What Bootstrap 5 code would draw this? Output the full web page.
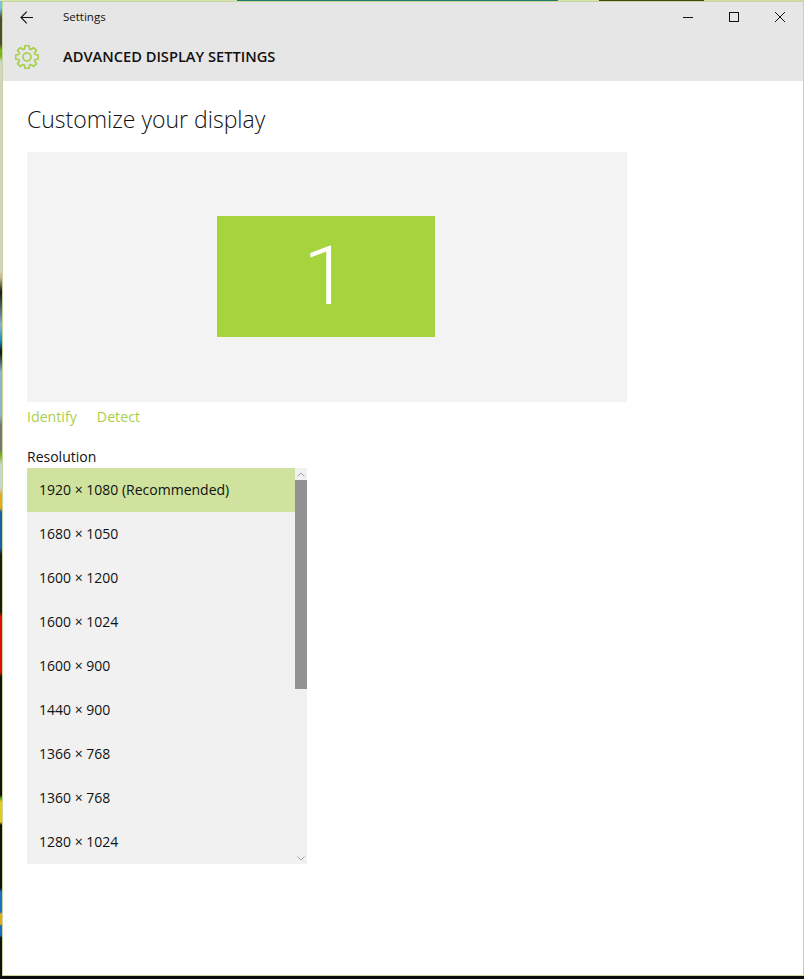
<!DOCTYPE html>
<html lang="en">
<head>
  <meta charset="UTF-8" />
  <meta name="viewport" content="width=device-width, initial-scale=1.0"/>
  <title>Settings</title>
  <link href="https://cdn.jsdelivr.net/npm/bootstrap@5.3.3/dist/css/bootstrap.min.css" rel="stylesheet"/>
  <style>
    html, body { height: 100%; }

    body {
      font-family: "Open Sans", "Liberation Sans", sans-serif;
      color: #111;
      padding: 2px 1px 4px 3px;
      background-color: #0b0b0b;
      background-image:
        linear-gradient(to right, #d4e3b0 0, #d4e3b0 237px, #1f7a6c 237px, #1f7a6c 558px, #d4e3b0 558px, #d4e3b0 599px, #3f4a14 599px, #3f4a14 704px, #cfdcaa 704px),
        linear-gradient(to bottom, #7cc4d8 0, #7cc4d8 8px, #4a4a38 18px, #4a4a38 44px, #7cb518 50px, #7cb518 56px, #cfd4c8 62px, #cfd4c8 270px, #c9b48c 278px, #1a1a1a 292px, #8fb4c4 325px, #1c8fc8 340px, #111 352px, #8fb4c4 372px, #8fb4c4 415px, #777 425px, #777 450px, #7cb518 455px, #c9d4d8 465px, #c9d4d8 488px, #e8a81c 495px, #e8a81c 508px, #1b5fa8 512px, #1b5fa8 548px, #1a1a10 555px, #1a1a10 612px, #e01010 617px, #e01010 672px, #111 677px, #111 795px, #4a9a30 798px, #e8c81c 802px, #e8c81c 822px, #111 825px, #111 888px, #1b6fc8 892px, #1b6fc8 912px, #e8a81c 914px, #e8a81c 924px, #1b6fc8 926px, #1b6fc8 935px, #111 938px, #111 975px);
      background-size: 100% 1px, 3px 100%;
      background-repeat: no-repeat;
    }

    .win-frame {
      height: 100%;
      background: #fff;
      box-shadow: 0 0 0 1px #c6d69c;
      overflow: hidden;
    }

    .win-head { background: #e6e6e6; height: 79px; }
    .title-row { height: 30px; }
    .back-btn { width: 48px; padding-left: 17px; }
    .win-label { font-size: 11.5px; margin-left: 12px; }
    .win-btn { width: 46px; height: 30px; }
    .page-row { height: 49px; padding-top: 1px; }
    .gear-wrap { width: 60px; padding-left: 12px; }
    .page-name { font-size: 14.65px; font-weight: 600; }

    .win-body { padding: 0 24px; }
    .page-title { font-size: 23px; font-weight: 300; line-height: 32px; margin: 22px 0 17px; }

    .display-box { width: 600px; height: 250px; padding: 0 2px 2px 0; background: #f3f3f3; }
    .display-tile {
      width: 218px;
      height: 121px;
      background: #a6d43d;
      color: #fff;
      font-family: Roboto, sans-serif;
      font-weight: 300;
      font-size: 82px;
      line-height: 1;
    }

    .link-row { font-size: 14.2px; height: 30px; gap: 20px; }
    .link-row a { color: #a8cf4c; text-decoration: none; }

    .res-label { font-size: 14px; line-height: 20px; margin-top: 15px; height: 21px; }
    .res-box { width: 280px; height: 396px; background: #f1f1f1; }
    .res-box .list-group-item {
      height: 44px;
      padding: 0 12px;
      border: 0;
      border-radius: 0;
      background: transparent;
      color: #111;
      font-size: 14px;
      line-height: 44px;
    }
    .res-box .list-group-item.picked { background: #cfe29e; }

    .scroll-rail { width: 12px; }
    .scroll-cap { height: 12px; }
    .scroll-thumb { height: 209px; background: #929292; }
  </style>
</head>
<body>

  <div class="win-frame d-flex flex-column">
    <div class="win-head">
      <div class="title-row d-flex align-items-center">
        <div class="back-btn d-flex align-items-center">
          <svg width="13" height="13" viewBox="0 0 13 13" fill="none" stroke="#111" stroke-width="1.1"><path d="M1 6.5H13M6.8 .7L1 6.5L6.8 12.3"/></svg>
        </div>
        <span class="win-label">Settings</span>
        <div class="ms-auto d-flex">
          <div class="win-btn d-flex align-items-center justify-content-center">
            <svg width="10" height="10" viewBox="0 0 10 10" stroke="#111" fill="none"><path d="M0 5.5H10"/></svg>
          </div>
          <div class="win-btn d-flex align-items-center justify-content-center">
            <svg width="10" height="10" viewBox="0 0 10 10" stroke="#111" fill="none"><rect x=".5" y=".5" width="9" height="9"/></svg>
          </div>
          <div class="win-btn d-flex align-items-center justify-content-center">
            <svg width="10" height="10" viewBox="0 0 10 10" stroke="#111" fill="none"><path d="M0 0L10 10M10 0L0 10"/></svg>
          </div>
        </div>
      </div>
      <div class="page-row d-flex align-items-center">
        <div class="gear-wrap d-flex">
          <svg width="24" height="24" viewBox="0 0 24 24" fill="none" stroke="#a6cf4a" stroke-width="1.7" stroke-linejoin="round">
            <path d="M14 .67L14.49 3.87L15.99 4.5L18.6 2.58L21.42 5.4L19.5 8.01L20.13 9.51L23.33 10V14L20.13 14.49L19.5 15.99L21.42 18.6L18.6 21.42L15.99 19.5L14.49 20.13L14 23.33H10L9.51 20.13L8.01 19.5L5.4 21.42L2.58 18.6L4.5 15.99L3.87 14.49L.67 14V10L3.87 9.51L4.5 8.01L2.58 5.4L5.4 2.58L8.01 4.5L9.51 3.87L10 .67Z"/>
            <circle cx="12" cy="12" r="4"/>
          </svg>
        </div>
        <span class="page-name">ADVANCED DISPLAY SETTINGS</span>
      </div>
    </div>

    <div class="win-body flex-grow-1">
      <h1 class="page-title">Customize your display</h1>

      <div class="display-box d-flex align-items-center justify-content-center">
        <div class="display-tile d-flex align-items-center justify-content-center">1</div>
      </div>

      <div class="link-row d-flex align-items-center">
        <a href="#">Identify</a>
        <a href="#">Detect</a>
      </div>

      <div class="res-label">Resolution</div>
      <div class="res-box d-flex">
        <div class="list-group flex-grow-1">
          <div class="list-group-item picked">1920 × 1080 (Recommended)</div>
          <div class="list-group-item">1680 × 1050</div>
          <div class="list-group-item">1600 × 1200</div>
          <div class="list-group-item">1600 × 1024</div>
          <div class="list-group-item">1600 × 900</div>
          <div class="list-group-item">1440 × 900</div>
          <div class="list-group-item">1366 × 768</div>
          <div class="list-group-item">1360 × 768</div>
          <div class="list-group-item">1280 × 1024</div>
        </div>
        <div class="scroll-rail d-flex flex-column">
          <div class="scroll-cap d-flex align-items-center justify-content-center">
            <svg width="8" height="5" viewBox="0 0 8 5" fill="none" stroke="#a0a0a0"><path d="M.5 4.5L4 1L7.5 4.5"/></svg>
          </div>
          <div class="scroll-thumb"></div>
          <div class="scroll-cap d-flex align-items-center justify-content-center mt-auto">
            <svg width="8" height="5" viewBox="0 0 8 5" fill="none" stroke="#a0a0a0"><path d="M.5 .5L4 4L7.5 .5"/></svg>
          </div>
        </div>
      </div>
    </div>
  </div>

  <script src="https://cdn.jsdelivr.net/npm/bootstrap@5.3.3/dist/js/bootstrap.bundle.min.js"></script>
</body>
</html>
